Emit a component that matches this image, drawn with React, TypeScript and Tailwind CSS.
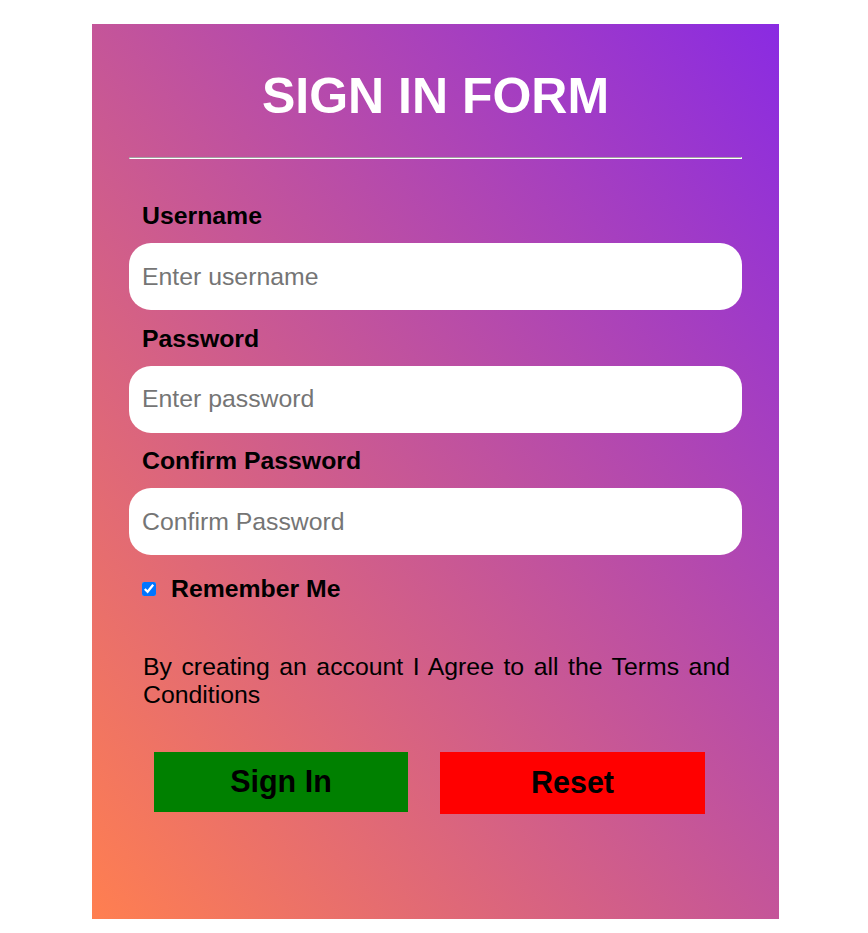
import React from "react";

export default function App() {
  const font = { fontFamily: '"Liberation Sans", Arial, sans-serif' };
  return (
    <div className="w-[868px] h-[933px] bg-white" style={font}>
      <div className="ml-[92px] pt-[24px]">
        <div className="w-[687px] h-[895px] bg-[linear-gradient(to_top_right,#ff7f50,#8a2be2)] px-[37px] pt-[43px]">
          <h1 className="text-[50px] leading-[58px] h-[58px] font-bold text-white text-center">
            SIGN IN FORM
          </h1>
          <div className="mt-[32px] h-[2px] border border-t-[#a0a0a0] border-l-[#a0a0a0] border-b-white border-r-white" />
          <form className="mt-[43px] flex flex-col text-black">
            {[
              ["Username", "Enter username", "text"],
              ["Password", "Enter password", "password"],
              ["Confirm Password", "Confirm Password", "password"],
            ].map(([label, ph, type], i) => (
              <div key={label} className={i === 0 ? "" : "mt-[14.5px]"}>
                <label className="block pl-[13px] text-[24.8px] leading-[28px] font-bold">{label}</label>
                <input
                  type={type}
                  placeholder={ph}
                  className="mt-[13px] block w-full h-[67px] rounded-[22px] bg-white pl-[13px] text-[24.8px] outline-none border-0 placeholder:text-[#757575]"
                  style={font}
                />
              </div>
            ))}
            <div className="mt-[20px] flex items-center h-[28px]">
              <input type="checkbox" defaultChecked className="ml-[13px] w-[14px] h-[14px] m-0" />
              <span className="ml-[15px] text-[24.8px] leading-[28px] font-bold">Remember Me</span>
            </div>
            <p className="mt-[50px] pl-[14px] pr-[12px] text-[24.8px] leading-[28px] text-justify">
              By creating an account I Agree to all the Terms and Conditions
            </p>
            <div className="mt-[43px] flex items-start">
              <button
                type="button"
                className="ml-[25px] w-[254px] h-[60px] bg-[#008000] text-black text-[30.5px] font-bold"
                style={font}
              >
                Sign In
              </button>
              <button
                type="button"
                className="ml-[32px] w-[265px] h-[62px] bg-[#ff0000] text-black text-[30.5px] font-bold"
                style={font}
              >
                Reset
              </button>
            </div>
          </form>
        </div>
      </div>
    </div>
  );
}
